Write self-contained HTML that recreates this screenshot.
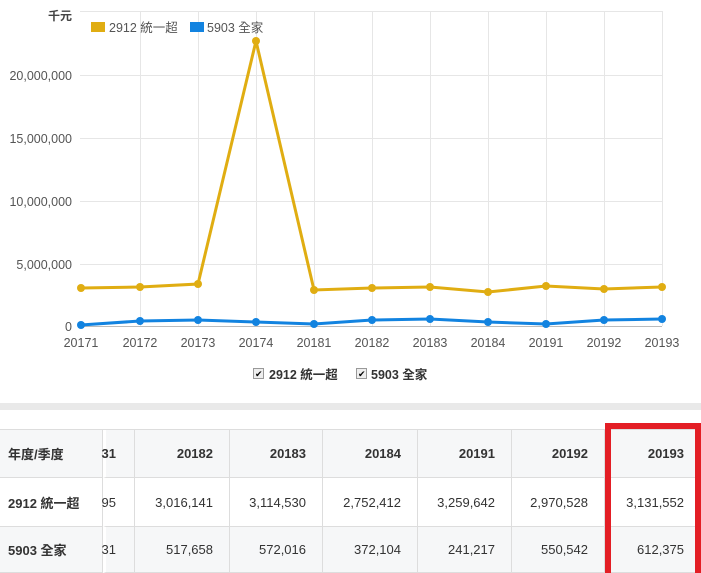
<!DOCTYPE html><html style="overflow:hidden"><head><meta charset="utf-8"><style>
html,body{overflow:hidden}
body{margin:0;width:701px;height:573px;overflow:hidden;background:#fff;font-family:"Liberation Sans","Noto Sans CJK TC",sans-serif;position:relative}
.c{position:absolute;box-sizing:border-box;border-right:1px solid #ddd;border-bottom:1px solid #ddd;font-size:13px;color:#333;text-align:right;padding-right:16px;display:flex;align-items:center;justify-content:flex-end}
.h{background:#f6f7f8;font-weight:bold}
.f{justify-content:flex-start;padding-left:8px;font-weight:bold;background:#f6f7f8}
</style></head><body>
<svg width="701" height="400" style="position:absolute;left:0;top:0" font-family="Liberation Sans,Noto Sans CJK TC,sans-serif">
<g stroke="#e6e6e6" stroke-width="1">
<line x1="80" y1="11.5" x2="662" y2="11.5"/><line x1="80" y1="75.5" x2="662" y2="75.5"/><line x1="80" y1="138.5" x2="662" y2="138.5"/><line x1="80" y1="201.5" x2="662" y2="201.5"/><line x1="80" y1="264.5" x2="662" y2="264.5"/>
<line x1="140.5" y1="11" x2="140.5" y2="326"/><line x1="198.5" y1="11" x2="198.5" y2="326"/><line x1="256.5" y1="11" x2="256.5" y2="326"/><line x1="314.5" y1="11" x2="314.5" y2="326"/><line x1="372.5" y1="11" x2="372.5" y2="326"/><line x1="430.5" y1="11" x2="430.5" y2="326"/><line x1="488.5" y1="11" x2="488.5" y2="326"/><line x1="546.5" y1="11" x2="546.5" y2="326"/><line x1="604.5" y1="11" x2="604.5" y2="326"/><line x1="662.5" y1="11" x2="662.5" y2="326"/>
</g>
<line x1="80" y1="326.5" x2="662" y2="326.5" stroke="#bbb"/>
<g font-size="12.5" fill="#555" text-anchor="end">
<text x="72" y="80">20,000,000</text><text x="72" y="143">15,000,000</text><text x="72" y="206">10,000,000</text><text x="72" y="269">5,000,000</text><text x="72" y="331">0</text>
</g>
<text x="72" y="20" font-size="12" font-weight="bold" fill="#444" text-anchor="end">千元</text>
<g font-size="12.5" fill="#555" text-anchor="middle">
<text x="81" y="347">20171</text><text x="140" y="347">20172</text><text x="198" y="347">20173</text><text x="256" y="347">20174</text><text x="314" y="347">20181</text><text x="372" y="347">20182</text><text x="430" y="347">20183</text><text x="488" y="347">20184</text><text x="546" y="347">20191</text><text x="604" y="347">20192</text><text x="662" y="347">20193</text>
</g>
<rect x="91" y="22" width="14" height="10" fill="#e0ad12"/><text x="109" y="32" font-size="12.5" fill="#555">2912 統一超</text>
<rect x="190" y="22" width="14" height="10" fill="#1283e0"/><text x="207" y="32" font-size="12.5" fill="#555">5903 全家</text>
<polyline fill="none" stroke="#e0ad12" stroke-width="3" points="81,288 140,287 198,284 256,41 314,290 372,288 430,287 488,292 546,286 604,289 662,287"/>
<g fill="#e0ad12"><circle cx="81" cy="288" r="4"/><circle cx="140" cy="287" r="4"/><circle cx="198" cy="284" r="4"/><circle cx="256" cy="41" r="4"/><circle cx="314" cy="290" r="4"/><circle cx="372" cy="288" r="4"/><circle cx="430" cy="287" r="4"/><circle cx="488" cy="292" r="4"/><circle cx="546" cy="286" r="4"/><circle cx="604" cy="289" r="4"/><circle cx="662" cy="287" r="4"/></g>
<polyline fill="none" stroke="#1283e0" stroke-width="3" points="81,325 140,321 198,320 256,322 314,324 372,320 430,319 488,322 546,324 604,320 662,319"/>
<g fill="#1283e0"><circle cx="81" cy="325" r="4"/><circle cx="140" cy="321" r="4"/><circle cx="198" cy="320" r="4"/><circle cx="256" cy="322" r="4"/><circle cx="314" cy="324" r="4"/><circle cx="372" cy="320" r="4"/><circle cx="430" cy="319" r="4"/><circle cx="488" cy="322" r="4"/><circle cx="546" cy="324" r="4"/><circle cx="604" cy="320" r="4"/><circle cx="662" cy="319" r="4"/></g>
<rect x="253.5" y="368.5" width="10" height="10" fill="#eee" stroke="#999"/><text x="255" y="377" font-size="9">✔</text>
<text x="269" y="379" font-size="12.5" font-weight="bold" fill="#333">2912 統一超</text>
<rect x="356.5" y="368.5" width="10" height="10" fill="#eee" stroke="#999"/><text x="358" y="377" font-size="9">✔</text>
<text x="371" y="379" font-size="12.5" font-weight="bold" fill="#333">5903 全家</text>
</svg>
<div style="position:absolute;left:0;top:403px;width:701px;height:7px;background:#e9e9e9"></div>
<div style="position:absolute;left:0;top:429px;width:701px;border-top:1px solid #ddd"></div>
<div class="c h f" style="left:0;top:430px;width:103px;height:48px">年度/季度</div>
<div class="c h" style="left:103px;top:430px;width:32px;height:48px;padding-right:18px;border-left:3px solid #fff">31</div>
<div class="c h" style="left:135px;top:430px;width:95px;height:48px">20182</div>
<div class="c h" style="left:230px;top:430px;width:93px;height:48px">20183</div>
<div class="c h" style="left:323px;top:430px;width:95px;height:48px">20184</div>
<div class="c h" style="left:418px;top:430px;width:94px;height:48px">20191</div>
<div class="c h" style="left:512px;top:430px;width:93px;height:48px">20192</div>
<div class="c h" style="left:605px;top:430px;width:96px;height:48px">20193</div>
<div class="c f" style="left:0;top:478px;width:103px;height:49px;background:#fff">2912 統一超</div>
<div class="c" style="left:103px;top:478px;width:32px;height:49px;padding-right:18px;border-left:3px solid #fff">95</div>
<div class="c" style="left:135px;top:478px;width:95px;height:49px">3,016,141</div>
<div class="c" style="left:230px;top:478px;width:93px;height:49px">3,114,530</div>
<div class="c" style="left:323px;top:478px;width:95px;height:49px">2,752,412</div>
<div class="c" style="left:418px;top:478px;width:94px;height:49px">3,259,642</div>
<div class="c" style="left:512px;top:478px;width:93px;height:49px">2,970,528</div>
<div class="c" style="left:605px;top:478px;width:96px;height:49px">3,131,552</div>
<div class="c f" style="left:0;top:527px;width:103px;height:46px">5903 全家</div>
<div class="c" style="left:103px;top:527px;width:32px;height:46px;padding-right:18px;border-left:3px solid #fff;background:#f6f7f8">31</div>
<div class="c" style="left:135px;top:527px;width:95px;height:46px;background:#f6f7f8">517,658</div>
<div class="c" style="left:230px;top:527px;width:93px;height:46px;background:#f6f7f8">572,016</div>
<div class="c" style="left:323px;top:527px;width:95px;height:46px;background:#f6f7f8">372,104</div>
<div class="c" style="left:418px;top:527px;width:94px;height:46px;background:#f6f7f8">241,217</div>
<div class="c" style="left:512px;top:527px;width:93px;height:46px;background:#f6f7f8">550,542</div>
<div class="c" style="left:605px;top:527px;width:96px;height:46px;background:#f6f7f8">612,375</div>
<div style="position:absolute;left:605px;top:423px;width:96px;height:150px;box-sizing:border-box;border:6px solid #e31e25;border-bottom:none"></div>
</body></html>
